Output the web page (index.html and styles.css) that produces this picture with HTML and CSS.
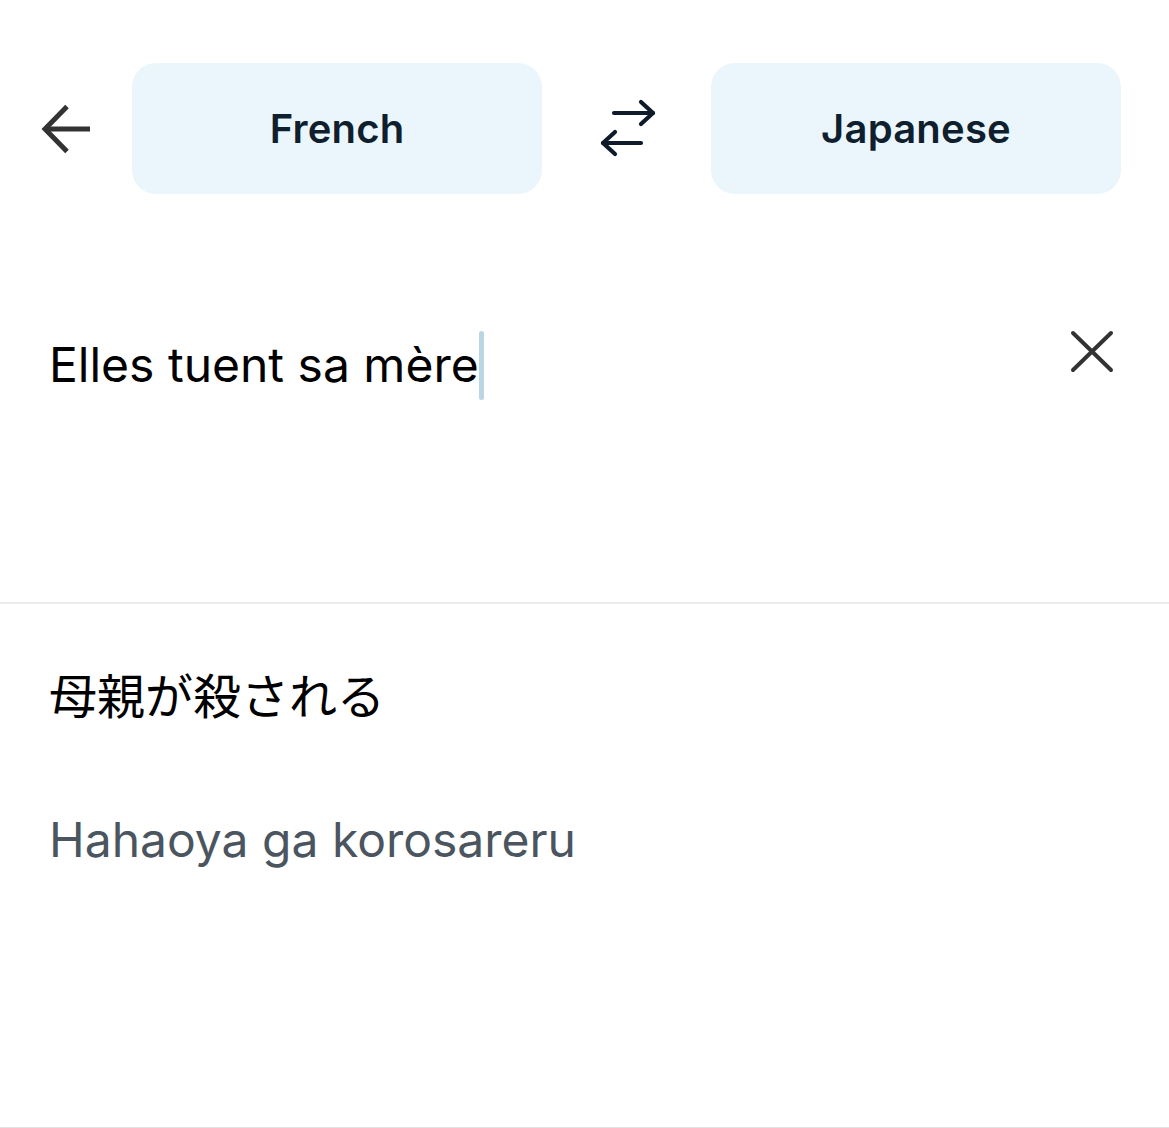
FILE: index.html
```html
<!DOCTYPE html>
<html lang="en">
<head>
<meta charset="utf-8">
<title>Translate</title>
<link rel="stylesheet" href="styles.css">
</head>
<body>
<div class="screen">
  <header class="lang-bar">
    <button class="icon-btn back" aria-label="Back">
      <svg width="50" height="50" viewBox="0 0 50 50" fill="none" stroke="#333333" stroke-width="5">
        <path d="M4 25 H49"/>
        <path d="M26 2.5 L4 25 L26 47.5"/>
      </svg>
    </button>
    <button class="lang-btn">French</button>
    <div class="swap">
      <svg width="60" height="60" viewBox="0 0 60 60" fill="none" stroke="#0f1b2a" stroke-width="4.2" stroke-linecap="round" stroke-linejoin="round">
        <path d="M17 14 H56"/>
        <path d="M44 3 L56 14 L44 25"/>
        <path d="M44 44 H6"/>
        <path d="M18 33 L6 44 L18 55"/>
      </svg>
    </div>
    <button class="lang-btn">Japanese</button>
  </header>

  <section class="source">
    <div class="source-row">
      <p class="source-text">Elles tuent sa mère<span class="caret"></span></p>
      <button class="icon-btn clear" aria-label="Clear">
        <svg width="44" height="44" viewBox="0 0 44 44" fill="none" stroke="#333333" stroke-width="4" stroke-linecap="round">
          <path d="M3 4 L41 41"/>
          <path d="M41 4 L3 41"/>
        </svg>
      </button>
    </div>
  </section>

  <section class="result">
    <p class="result-text">母親が殺される</p>
    <p class="romaji">Hahaoya ga korosareru</p>
  </section>
</div>
</body>
</html>
```

FILE: styles.css
```css
* { box-sizing: border-box; }

html, body {
  margin: 0;
  padding: 0;
  background: #ffffff;
}

body {
  font-family: Inter, "Noto Sans", "Noto Sans CJK JP", sans-serif;
}

.screen {
  width: 1169px;
  height: 1128px;
  display: flex;
  flex-direction: column;
}

button {
  font: inherit;
  border: none;
  background: none;
  padding: 0;
  cursor: pointer;
}

.lang-bar {
  display: flex;
  align-items: center;
  padding: 63px 48px 0 41px;
}

.icon-btn {
  display: flex;
  align-items: center;
  justify-content: center;
}

.back {
  width: 50px;
  height: 50px;
  margin-right: 41px;
}

.lang-btn {
  width: 410px;
  height: 131px;
  border-radius: 24px;
  background: #eaf6fc;
  color: #0f1f2e;
  font-size: 40px;
  font-weight: 600;
  letter-spacing: 0.2px;
}

.swap {
  width: 169px;
  display: flex;
  justify-content: center;
}

.source {
  height: 410px;
  border-bottom: 2px solid #ebebf0;
  padding: 136px 55px 0 49px;
}

.source-row {
  display: flex;
  justify-content: space-between;
  align-items: flex-start;
}

.source-text {
  margin: 0;
  font-size: 48px;
  line-height: 70px;
  color: #000000;
  display: flex;
  align-items: center;
}

.caret {
  display: inline-block;
  width: 5px;
  height: 69px;
  margin-left: 0;
  border-radius: 3px;
  background: #bcd5e4;
}

.clear {
  width: 44px;
  height: 44px;
  margin-top: -1px;
}

.result {
  flex: 1;
  border-bottom: 1px solid #e2e2e2;
  padding: 57px 50px 0 49px;
}

.result-text {
  margin: 0;
  font-family: "Noto Sans CJK JP", sans-serif;
  font-size: 48px;
  line-height: 64px;
  color: #000000;
}

.romaji {
  margin: 83px 0 0;
  font-size: 48px;
  line-height: 64px;
  color: #4b5560;
}
```
